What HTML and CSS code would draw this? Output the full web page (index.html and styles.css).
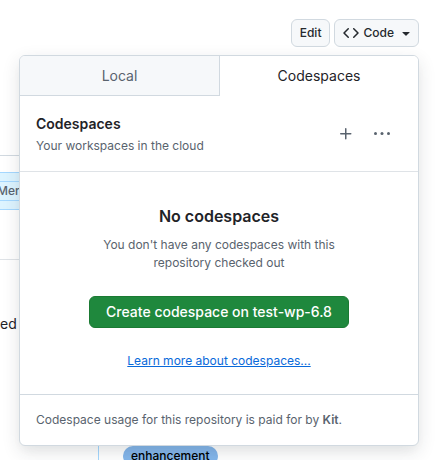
FILE: index.html
```html
<!DOCTYPE html>
<html lang="en">
<head>
<meta charset="utf-8">
<title>Codespaces</title>
<link rel="stylesheet" href="styles.css">
</head>
<body>
<header class="toolbar">
  <button class="btn" type="button">Edit</button>
  <div class="menu">
    <button class="btn btn-code" type="button" aria-expanded="true">
      <svg width="16" height="16" viewBox="0 0 16 16" aria-hidden="true"><path d="m11.28 3.22 4.25 4.25a.75.75 0 0 1 0 1.06l-4.25 4.25a.749.749 0 0 1-1.275-.326.749.749 0 0 1 .215-.734L13.94 8l-3.72-3.72a.749.749 0 0 1 .326-1.275.749.749 0 0 1 .734.215Zm-6.56 0a.751.751 0 0 1 1.042.018.751.751 0 0 1 .018 1.042L2.06 8l3.72 3.72a.749.749 0 0 1-.326 1.275.749.749 0 0 1-.734-.215L.47 8.53a.75.75 0 0 1 0-1.06Z"/></svg>
      <span>Code</span>
      <svg class="caret" width="16" height="16" viewBox="0 0 16 16" aria-hidden="true"><path d="m4.427 7.427 3.396 3.396a.25.25 0 0 0 .354 0l3.396-3.396A.25.25 0 0 0 11.396 7H4.604a.25.25 0 0 0-.177.427Z"/></svg>
    </button>
    <section class="popover" aria-label="Code">
      <div class="tabs" role="tablist">
        <button class="tab" type="button" role="tab" aria-selected="false">Local</button>
        <button class="tab tab-selected" type="button" role="tab" aria-selected="true">Codespaces</button>
      </div>
      <div class="panel-head">
        <div class="panel-title">
          <h2>Codespaces</h2>
          <p>Your workspaces in the cloud</p>
        </div>
        <button class="icon-btn" type="button" aria-label="Create a codespace">
          <svg width="16" height="16" viewBox="0 0 16 16" aria-hidden="true"><path d="M7.75 2a.75.75 0 0 1 .75.75V7h4.25a.75.75 0 0 1 0 1.5H8.5v4.25a.75.75 0 0 1-1.5 0V8.5H2.75a.75.75 0 0 1 0-1.5H7V2.75A.75.75 0 0 1 7.75 2Z"/></svg>
        </button>
        <button class="icon-btn" type="button" aria-label="More options">
          <svg width="20" height="16" viewBox="0 0 20 16" aria-hidden="true"><circle cx="3.500" cy="7.500" r="1.500"/><circle cx="10" cy="7.500" r="1.500"/><circle cx="16.500" cy="7.500" r="1.500"/></svg>
        </button>
      </div>
      <div class="blank">
        <h3>No codespaces</h3>
        <p>You don't have any codespaces with this repository checked out</p>
        <button class="btn-primary" type="button">Create codespace on test-wp-6.8</button>
        <a href="#learn">Learn more about codespaces...</a>
      </div>
      <footer class="panel-foot">Codespace usage for this repository is paid for by <strong>Kit</strong>.</footer>
    </section>
  </div>
</header>
<main class="thread">
  <div class="comment-head"><span class="role">Member</span></div>
  <div class="comment-body">ed to</div>
  <div class="timeline"><span class="label">enhancement</span></div>
</main>
</body>
</html>
```
FILE: styles.css
```css
* {
  box-sizing: border-box;
}

body {
  margin: 0;
  height: 100vh;
  overflow: hidden;
  background: #fff;
  color: #1f2328;
  font: 14px/20px Inter, "Liberation Sans", sans-serif;
}

h2, h3, p {
  margin: 0;
}

button {
  font: inherit;
  color: inherit;
}

svg {
  fill: currentColor;
  flex: none;
}

.toolbar {
  display: flex;
  justify-content: flex-end;
  gap: 4px;
  height: 155px;
  padding: 19px 19px 0;
}

.menu {
  position: relative;
}

.btn {
  display: flex;
  align-items: center;
  height: 28px;
  padding: 0 8px;
  border: 1px solid #d1d9e0;
  border-radius: 6px;
  background: #f6f8fa;
  color: #25292e;
  font-size: 12px;
  font-weight: 500;
}

.btn-code {
  gap: 4px;
  padding: 0 4px 0 8px;
}

.popover {
  position: absolute;
  z-index: 1;
  top: 36px;
  right: 0;
  width: calc(100vw - 38px);
  border: 1px solid #d1d9e0;
  border-radius: 6px;
  background: #fff;
  box-shadow: 0 6px 12px -3px rgba(37, 41, 46, 0.04), 0 6px 18px 0 rgba(37, 41, 46, 0.12);
}

.tabs {
  display: grid;
  grid-template-columns: 1fr 1fr;
  height: 40px;
}

.tab {
  border: 0;
  border-bottom: 1px solid #d1d9e0;
  border-radius: 5px 0 0;
  background: #f6f8fa;
  color: #59636e;
  padding: 0;
}

.tab-selected {
  border-bottom: 0;
  border-left: 1px solid #d1d9e0;
  border-radius: 0 5px 0 0;
  background: #fff;
  color: #1f2328;
}

.panel-head {
  display: flex;
  align-items: center;
  gap: 4px;
  height: 76px;
  padding: 0 20px 0 16px;
  border-bottom: 1px solid #dfe3e7;
}

.panel-title {
  flex: 1;
  font-size: 12px;
  color: #59636e;
}

.panel-title h2 {
  color: #1f2328;
  font-size: 14px;
  line-height: 24px;
  font-weight: 600;
}

.icon-btn {
  display: flex;
  align-items: center;
  justify-content: center;
  width: 32px;
  height: 32px;
  padding: 0;
  border: 0;
  background: none;
  color: #59636e;
}

.blank {
  display: flex;
  flex-direction: column;
  align-items: center;
  padding: 32px 76px 24px;
  text-align: center;
  font-size: 12px;
}

.blank h3 {
  font-size: 16px;
  line-height: 24px;
  font-weight: 600;
}

.blank p {
  margin: 8px 0 24px;
  line-height: 18px;
  color: #59636e;
}

.btn-primary {
  height: 32px;
  padding: 0 16px;
  border: 1px solid #1b7a33;
  border-radius: 6px;
  background: #1f883d;
  color: #fff;
  font-size: 14px;
  font-weight: 500;
  white-space: nowrap;
}

.blank a {
  margin-top: 24px;
  line-height: 18px;
  color: #0969da;
  white-space: nowrap;
}

.panel-foot {
  padding: 16px;
  border-top: 1px solid #d1d9e0;
  color: #59636e;
  font-size: 12px;
  line-height: 18px;
}

.panel-foot strong {
  font-weight: 600;
}

.thread {
  width: 50%;
  padding-top: 16px;
  border-top: 1px solid #d1d9e0;
}

.comment-head {
  display: flex;
  align-items: center;
  height: 38px;
  border: solid #a5d8ff;
  border-width: 1px 0;
  background: #ddf4ff;
}

.role {
  margin-left: -8px;
  padding: 0 4px;
  border: 1px solid #a5d8ff;
  color: #59636e;
  font-size: 12px;
  line-height: 18px;
  font-weight: 500;
}

.comment-body {
  height: 186px;
  margin-top: 49px;
  padding-top: 54px;
  border-top: 1px solid #dfe3e7;
}

.timeline {
  height: 15px;
  margin-left: 98px;
  padding-left: 24px;
  border-left: 1px solid #a5d8ff;
}

.label {
  display: inline-block;
  padding: 0 8px;
  border-radius: 10px;
  background: #84b6eb;
  color: #000;
  font-size: 12px;
  line-height: 20px;
  font-weight: 500;
}
```
